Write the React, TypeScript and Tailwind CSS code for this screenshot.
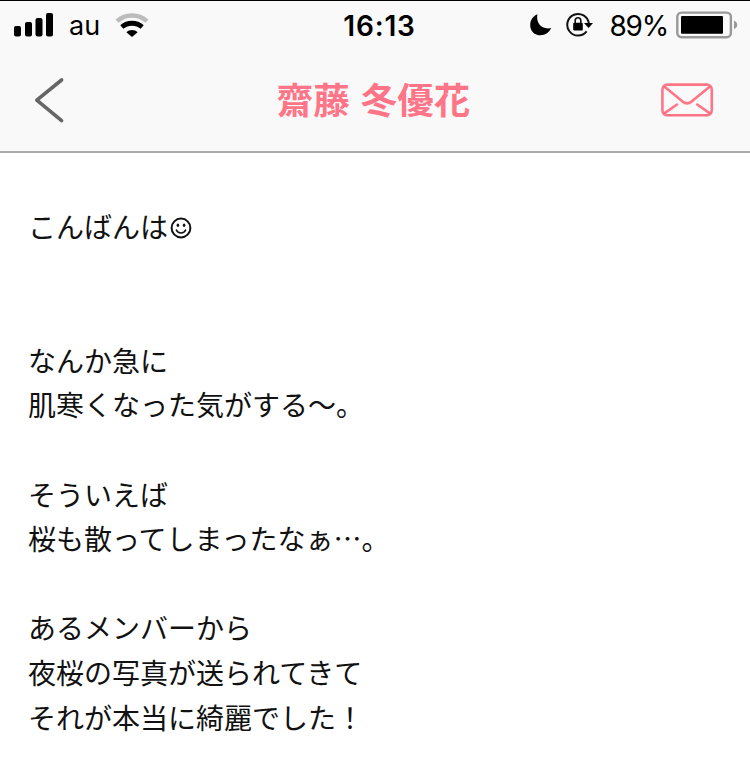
import React from 'react';

const messageLines: string[] = [
  'こんばんは',
  '',
  '',
  'なんか急に',
  '肌寒くなった気がする〜。',
  '',
  'そういえば',
  '桜も散ってしまったなぁ…。',
  '',
  'あるメンバーから',
  '夜桜の写真が送られてきて',
  'それが本当に綺麗でした！',
];

const SignalIcon = () => (
  <svg width="40" height="24" viewBox="0 0 40 24" fill="#000">
    <rect x="0" y="13" width="7" height="10.5" rx="2" />
    <rect x="11" y="9" width="7" height="14.5" rx="2" />
    <rect x="21.5" y="5" width="7" height="18.5" rx="2" />
    <rect x="32" y="0" width="7" height="23.5" rx="2" />
  </svg>
);

const WifiIcon = () => (
  <svg width="34" height="24" viewBox="0 0 34 24" fill="none">
    <path d="M2 8.2C10.5 0.6 23.5 0.6 32 8.2" stroke="#bcbcbc" strokeWidth="4.4" />
    <path d="M6.8 14C12.6 9 21.4 9 27.2 14" stroke="#000" strokeWidth="4.8" />
    <path d="M11.4 19.2C14.4 16.4 19.6 16.4 22.6 19.2L17 24Z" fill="#000" />
  </svg>
);

const MoonIcon = () => (
  <svg width="22" height="22" viewBox="0 0 22 22">
    <path d="M7.4 0.3C5.7 8.8 11.5 16.1 21.2 14.1C18.8 19 14.8 21.3 10.4 21.3C4.5 21.3 0.2 16.8 0.2 11.2C0.2 6.2 3 2.2 7.4 0.3Z" fill="#000" />
  </svg>
);

const RotationLockIcon = () => (
  <svg width="28" height="26" viewBox="0 0 28 26" fill="none">
    <path d="M22.8 11.5A10.8 10.8 0 1 0 20.6 19.4" stroke="#111" strokeWidth="2" />
    <path d="M18 11H27L22.6 16Z" fill="#000" />
    <rect x="7.2" y="10.8" width="9.6" height="7.6" rx="1" fill="#000" />
    <path d="M9.2 11V8.6a2.8 2.8 0 0 1 5.6 0V11" stroke="#111" strokeWidth="1.6" />
  </svg>
);

const BatteryIcon = () => (
  <svg width="62" height="28" viewBox="0 0 62 28" fill="none">
    <rect x="1.3" y="1.6" width="53.6" height="24.6" rx="4.2" stroke="#999" strokeWidth="2.4" />
    <rect x="5" y="5" width="42" height="17.8" rx="1" fill="#000" />
    <path d="M58 9.6C60.4 10.8 61.2 12.2 61.2 13.9C61.2 15.6 60.4 17 58 18.2Z" fill="#999" />
  </svg>
);

const BackIcon = () => (
  <svg width="32" height="48" viewBox="0 0 32 48" fill="none">
    <path d="M28.6 4L3.8 24.2L28.6 44.6" stroke="#666" strokeWidth="3.6" strokeLinecap="round" strokeLinejoin="round" />
  </svg>
);

const MailIcon = () => (
  <svg width="54" height="34" viewBox="0 0 54 34" fill="none" stroke="#ff7588" strokeWidth="2.6" strokeLinecap="round">
    <rect x="2.4" y="1.6" width="49.4" height="30.6" rx="5" />
    <path d="M4 3.2L22.6 18.6Q27.1 22 31.6 18.6L50.2 3.2" />
    <path d="M4 30.6L17 21.5M50.2 30.6L37.2 21.5" />
  </svg>
);

const SmileIcon = () => (
  <svg className="mt-[3px]" width="22" height="22" viewBox="0 0 22 22" fill="none" stroke="#111" strokeLinecap="round">
    <circle cx="11" cy="11" r="9.4" strokeWidth="2" />
    <path d="M6.4 13.1C7.8 17 14.2 17 15.6 13.1" strokeWidth="1.6" />
    <ellipse cx="7.9" cy="8.2" rx="1.3" ry="1.7" fill="#111" stroke="none" />
    <ellipse cx="14.1" cy="8.2" rx="1.3" ry="1.7" fill="#111" stroke="none" />
  </svg>
);

const StatusBar = () => (
  <div className="grid h-[50px] grid-cols-3 text-black">
    <div className="flex items-start pl-[14px]">
      <div className="pt-[12px]">
        <SignalIcon />
      </div>
      <span className="ml-[15px] text-[27px] leading-[50px]">au</span>
      <div className="ml-[15px] pt-[12px]">
        <WifiIcon />
      </div>
    </div>
    <div className="pl-[9px] text-center text-[28px] leading-[50px] font-semibold tracking-[0.8px]">16:13</div>
    <div className="flex items-start justify-end pr-[12px]">
      <div className="pt-[13px]">
        <MoonIcon />
      </div>
      <div className="ml-[14px] pt-[11px]">
        <RotationLockIcon />
      </div>
      <span className="ml-[15px] text-[28px] leading-[50px] tracking-[-1.2px]">89%</span>
      <div className="ml-[8px] pt-[10px]">
        <BatteryIcon />
      </div>
    </div>
  </div>
);

const App: React.FC = () => {
  return (
    <div className="h-[777px] w-[750px] overflow-hidden bg-white font-['Inter','Noto_Sans_CJK_JP',sans-serif]">
      <header className="h-[153px] border-t border-b-2 border-t-black border-b-[#aaa] bg-[#f9f9f9]">
        <StatusBar />
        <div className="flex h-[98px] items-center justify-between pr-[36px] pl-[33px]">
          <button className="flex w-[54px]" aria-label="戻る">
            <BackIcon />
          </button>
          <h1 className="pb-[2px] font-['Noto_Sans_CJK_JP',sans-serif] text-[36.5px] leading-[60px] font-bold [word-spacing:2.5px] text-[#ff7588]">
            齋藤 冬優花
          </h1>
          <button className="flex" aria-label="メール">
            <MailIcon />
          </button>
        </div>
      </header>

      <main className="pt-[51px] pl-[28px] font-['Noto_Sans_CJK_JP',sans-serif] text-[28px] leading-[44.6px] text-[#111]">
        {messageLines.map((line, i) => (
          <p key={i} className="flex h-[44.6px] items-center gap-[2px] whitespace-nowrap">
            {line}
            {i === 0 && <SmileIcon />}
          </p>
        ))}
      </main>
    </div>
  );
};

export default App;
